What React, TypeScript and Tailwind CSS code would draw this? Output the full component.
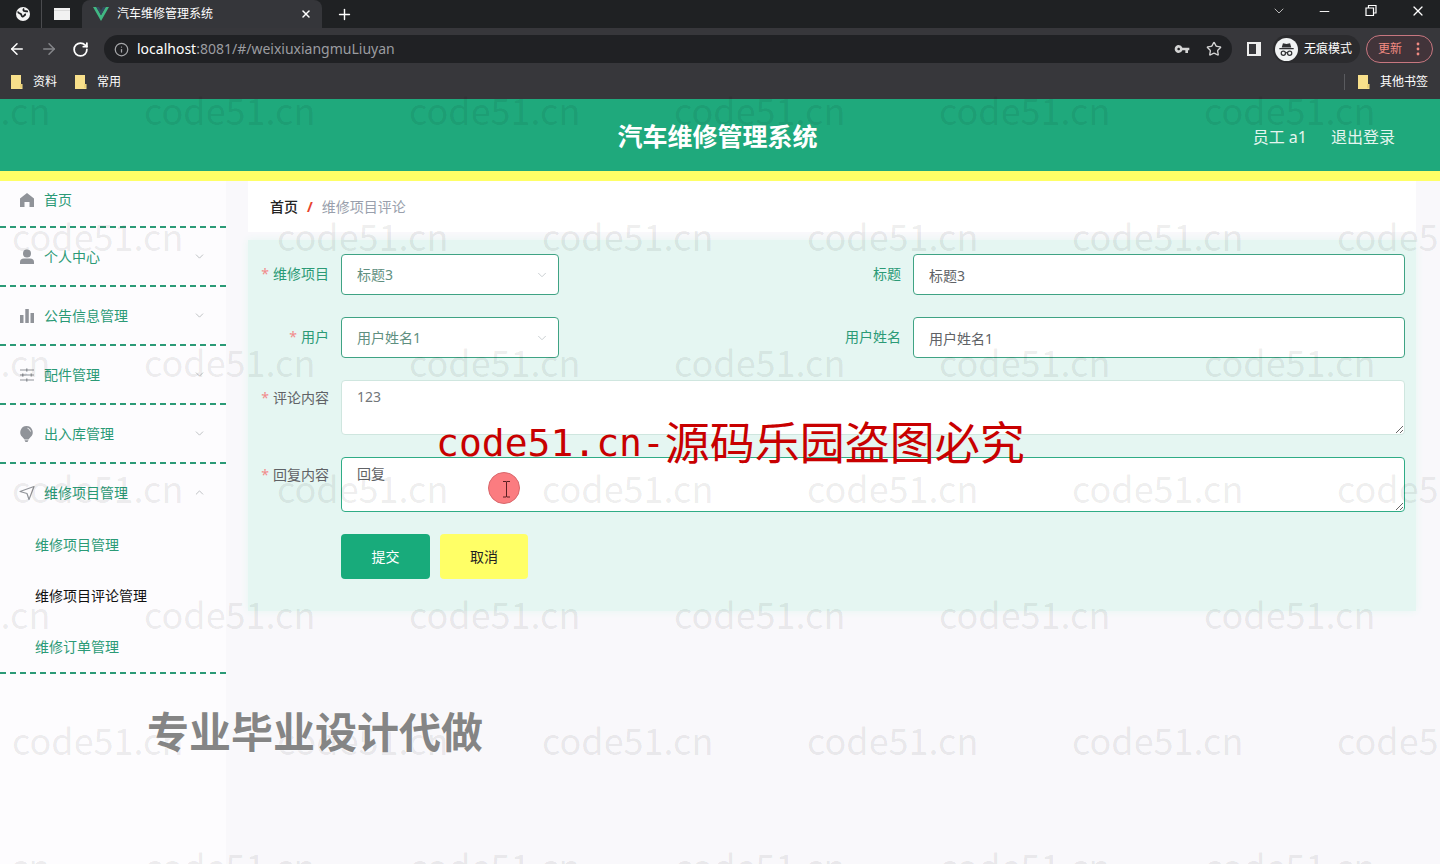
import { useState } from "react";
import type { ReactNode } from "react";
import { ArrowLeft, ArrowRight, ChevronDown, ChevronUp, Info, Minus, Plus, RotateCw, Star, X } from "lucide-react";
import { MdVpnKey } from "react-icons/md";

type MenuEntry = {
  label: string;
  icon: ReactNode;
  children?: string[];
};

const menu: MenuEntry[] = [
  { label: "个人中心", icon: <UserIcon /> },
  { label: "公告信息管理", icon: <DataIcon /> },
  { label: "配件管理", icon: <SlidersIcon /> },
  { label: "出入库管理", icon: <BulbIcon /> },
  {
    label: "维修项目管理",
    icon: <PositionIcon />,
    children: ["维修项目管理", "维修项目评论管理", "维修订单管理"]
  }
];

const watermarkRows = [0, 1, 2, 3, 4, 5, 6];
const watermarkCells = [0, 1, 2, 3, 4, 5];

export default function App() {
  return (
    <div className="relative flex min-h-screen flex-col overflow-hidden bg-[#f9f8fb] font-['Noto_Sans','Noto_Sans_CJK_SC',sans-serif] text-sm">
      <BrowserChrome />
      <SiteHeader />
      <div className="flex flex-1">
        <Sidebar />
        <main className="min-w-0 flex-1 pr-6 pl-[22px]">
          <nav aria-label="面包屑" className="flex h-[51px] items-center gap-[9px] bg-white px-[22px]">
            <a className="font-medium text-[#222]" href="#/">
              首页
            </a>
            <span className="font-bold text-[#e8432e]">/</span>
            <span className="text-[#999fac]">维修项目评论</span>
          </nav>
          <CommentForm />
        </main>
      </div>
      <Watermarks />
    </div>
  );
}

function BrowserChrome() {
  return (
    <div className="bg-[#37373b] text-xs text-white">
      <div className="flex h-7 items-stretch bg-[#1f2123]">
        <div className="flex w-[42px] items-center justify-center border-r border-[#4a4b4e] pl-1">
          <svg aria-hidden="true" height="16" viewBox="0 0 16 16" width="16">
            <circle cx="8" cy="8" fill="#f4f4f4" r="7" />
            <path
              d="M3 5.500c.3 2.500 2 1.500 3 2.700.8 1 .2 2 1.500 2.300 2 .4 1.500-2.200 3.500-2M9 2.500c-1.300 1.500-.5 2.500 1 2.600 1.200.1 1.800.4 3 .2"
              fill="none"
              stroke="#1f2123"
              strokeWidth="1.800"
            />
          </svg>
        </div>
        <div className="flex w-10 items-center justify-center">
          <svg aria-hidden="true" height="12" viewBox="0 0 16 12" width="16">
            <path d="M0 0h16v12H0z" fill="#f1f1f1" />
            <path d="M0 2.500h16" stroke="#dadada" />
          </svg>
        </div>
        <div className="flex w-60 items-center rounded-t-lg bg-[#35363a] pr-2.5 pl-[11px]">
          <svg aria-hidden="true" height="14" viewBox="0 0 16 14" width="16">
            <path d="M0 0h3.300L8 8.200 12.700 0H16L8 14z" fill="#41b883" />
            <path d="M3.300 0H6l2 3.500L10 0h2.700L8 8.200z" fill="#35495e" />
          </svg>
          <span className="ml-2 flex-1">汽车维修管理系统</span>
          <button aria-label="关闭标签页" type="button">
            <X size={12} strokeWidth={3} />
          </button>
        </div>
        <button aria-label="新标签页" className="ml-3.5" type="button">
          <Plus size={17} />
        </button>
        <div className="ml-auto flex items-center pr-3.5 pb-1.5">
          <button aria-label="搜索标签页" className="mr-[30px] text-[#b5b5b5]" type="button">
            <ChevronDown size={16} strokeWidth={1.500} />
          </button>
          <button aria-label="最小化" className="mr-8" type="button">
            <Minus size={15} strokeWidth={1.500} />
          </button>
          <button aria-label="还原" className="mr-8" type="button">
            <svg height="14" viewBox="0 0 14 14" width="14">
              <path d="M2 4h7.500v7.500H2zM4.500 4V1.500H12V9H9.500" fill="none" stroke="currentColor" strokeWidth="1.200" />
            </svg>
          </button>
          <button aria-label="关闭" type="button">
            <X size={16} strokeWidth={1.800} />
          </button>
        </div>
      </div>

      <div className="flex h-[42px] items-center pr-[7px] pl-2">
        <button aria-label="后退" type="button">
          <ArrowLeft size={18} />
        </button>
        <button aria-label="前进" className="ml-3.5 text-[#85868a]" type="button">
          <ArrowRight size={18} />
        </button>
        <button aria-label="刷新" className="ml-3.5" type="button">
          <RotateCw size={17} strokeWidth={2.500} />
        </button>
        <div className="ml-[15px] flex h-7 flex-1 items-center rounded-full bg-[#202124] px-2.5">
          <Info aria-hidden="true" className="text-[#a5a6a9]" size={15} />
          <p className="ml-2 flex-1 text-sm text-[#9b9ca0]">
            <span className="text-white">localhost</span>:8081/#/weixiuxiangmuLiuyan
          </p>
          <MdVpnKey aria-hidden="true" className="mr-4 text-[#d4d4d4]" size={16} />
          <Star aria-hidden="true" className="text-[#d4d4d4]" size={16} />
        </div>
        <button aria-label="侧边栏" className="ml-[15px]" type="button">
          <svg height="14" viewBox="0 0 14 14" width="14">
            <path d="M1 1h12v12H1z" fill="none" stroke="#eee" strokeWidth="2" />
            <path d="M9 1h4v12H9z" fill="#eee" />
          </svg>
        </button>
        <div className="ml-3 flex h-7 items-center gap-1.5 rounded-full bg-[#2b2b2e] pr-2 pl-0.5">
          <svg aria-hidden="true" height="23" viewBox="0 0 24 24" width="23">
            <circle cx="12" cy="12" fill="#f1f3f4" r="12" />
            <path d="M8.300 5.500 12 6.300l3.700-.8 1.300 4.500H7zM4.500 10.500h15v1.300h-15z" fill="#303134" />
            <circle cx="8.700" cy="16" fill="none" r="2.200" stroke="#303134" strokeWidth="1.300" />
            <circle cx="15.300" cy="16" fill="none" r="2.200" stroke="#303134" strokeWidth="1.300" />
            <path d="M10.900 15.600q1.100-.8 2.200 0" fill="none" stroke="#303134" strokeWidth="1.200" />
          </svg>
          <span>无痕模式</span>
        </div>
        <button
          className="ml-1.5 flex h-7 items-center gap-3.5 rounded-full border border-[#c77780] bg-[#42343a] pr-3 pl-[11px] text-[#f28b82]"
          type="button"
        >
          更新
          <svg aria-hidden="true" fill="currentColor" height="14" viewBox="0 0 4 14" width="4">
            <circle cx="2" cy="2" r="1.400" />
            <circle cx="2" cy="7" r="1.400" />
            <circle cx="2" cy="12" r="1.400" />
          </svg>
        </button>
      </div>

      <div className="flex h-[29px] items-center gap-[17px] pr-3 pb-1.5 pl-2.5">
        <Bookmark label="资料" />
        <Bookmark label="常用" />
        <div className="ml-auto flex items-center gap-3">
          <span className="h-4 w-px bg-[#5a5b5f]" />
          <Bookmark label="其他书签" />
        </div>
      </div>
    </div>
  );
}

function Bookmark({ label }: { label: string }) {
  return (
    <a className="flex items-center gap-2.5" href="#/">
      <svg aria-hidden="true" height="14" viewBox="0 0 13 14" width="13">
        <path d="M1 0h10v9h1.500v5H1z" fill="#f8e08b" />
        <path d="M11 9v4" stroke="#dcc067" />
      </svg>
      {label}
    </a>
  );
}

function SiteHeader() {
  return (
    <header className="grid h-[82px] grid-cols-[1fr_auto_1fr] items-center border-b-10 border-[#ffff66] bg-[#1fa97c] pt-[3px] pr-[45px] pl-10 text-white">
      <h1 className="col-start-2 text-[25px] font-bold">汽车维修管理系统</h1>
      <div className="flex justify-end gap-6 text-base text-[#e4f5ef]">
        <span>员工 a1</span>
        <button type="button">退出登录</button>
      </div>
    </header>
  );
}

function Sidebar() {
  const [expanded, setExpanded] = useState("维修项目管理");

  return (
    <aside className="w-[226px] shrink-0 bg-[#fdfcfe] text-[#2b9a76]">
      <a className="flex h-[47px] items-center gap-2 border-b-2 border-dashed border-[#2b9a76] pb-2 pl-[18px]" href="#/">
        <HomeIcon />
        首页
      </a>
      {menu.map((entry) => {
        const isOpen = expanded === entry.label;
        return (
          <div className="border-b-2 border-dashed border-[#2b9a76]" key={entry.label}>
            <button
              aria-expanded={isOpen}
              className="flex h-[57px] w-full cursor-pointer items-center gap-2 pr-5 pl-[18px] text-left"
              type="button"
              onClick={() => setExpanded(isOpen ? "" : entry.label)}
            >
              {entry.icon}
              <span className="flex-1">{entry.label}</span>
              {isOpen ? (
                <ChevronUp aria-hidden="true" className="text-[#b0b4b6]" size={13} strokeWidth={1.500} />
              ) : (
                <ChevronDown aria-hidden="true" className="text-[#b0b4b6]" size={13} strokeWidth={1.500} />
              )}
            </button>
            {isOpen && entry.children ? (
              <div className="-mt-0.5">
                {entry.children.map((child) => (
                  <a
                    className={`flex h-[51px] items-center pl-[35px] ${child === "维修项目评论管理" ? "text-[#111]" : ""}`}
                    href="#/"
                    key={child}
                  >
                    {child}
                  </a>
                ))}
              </div>
            ) : null}
          </div>
        );
      })}
    </aside>
  );
}

function CommentForm() {
  const [reply, setReply] = useState("回复");

  return (
    <form
      className="mt-2 bg-[#e5f6f2] pt-3.5 pr-[11px] pb-8 pl-[13px] shadow-[0_0_8px_#e5f6f2]"
      onSubmit={(event) => event.preventDefault()}
    >
      <div className="grid grid-cols-2 gap-y-[22px]">
        <Field id="project" label="维修项目" required tone="green">
          <SelectBox id="project" value="标题3" />
        </Field>
        <Field id="title" label="标题" tone="green">
          <input
            className="h-[41px] w-full rounded border border-[#3fa384] bg-white px-[15px] text-[#606266] outline-none"
            defaultValue="标题3"
            id="title"
          />
        </Field>
        <Field id="user" label="用户" required tone="green">
          <SelectBox id="user" value="用户姓名1" />
        </Field>
        <Field id="username" label="用户姓名" tone="green">
          <input
            className="h-[41px] w-full rounded border border-[#3fa384] bg-white px-[15px] text-[#606266] outline-none"
            defaultValue="用户姓名1"
            id="username"
          />
        </Field>
        <div className="col-span-2">
          <Field id="content" label="评论内容" required tone="gray">
            <textarea
              className="block h-[55px] w-full resize-y rounded border border-[#cfe6df] bg-white px-[15px] py-1.5 text-[#73767a] outline-none"
              defaultValue="123"
              id="content"
              readOnly
            />
          </Field>
        </div>
        <div className="col-span-2">
          <Field id="reply" label="回复内容" required tone="gray">
            <textarea
              className="block h-[55px] w-full resize-y rounded border border-[#2fac86] bg-white px-[15px] py-1.5 text-[#606266] outline-none"
              id="reply"
              value={reply}
              onChange={(event) => setReply(event.target.value)}
            />
          </Field>
        </div>
      </div>
      <div className="mt-[22px] flex gap-2.5 pl-20">
        <button className="h-[45px] w-[89px] rounded bg-[#18ab7b] text-white" type="submit">
          提交
        </button>
        <button className="h-[45px] w-[88px] rounded-sm bg-[#ffff66] text-[#222]" type="button">
          取消
        </button>
      </div>
    </form>
  );
}

type FieldProps = {
  id: string;
  label: string;
  required?: boolean;
  tone: "green" | "gray";
  children: ReactNode;
};

function Field({ id, label, required, tone, children }: FieldProps) {
  return (
    <div className="flex">
      <label
        className={`w-20 shrink-0 pr-3 text-right ${tone === "green" ? "leading-10 text-[#2b9a76]" : "leading-9 text-[#606266]"}`}
        htmlFor={id}
      >
        {required ? <span className="mr-1 text-[#f28b8b]">*</span> : null}
        {label}
      </label>
      <div className="min-w-0 flex-1">{children}</div>
    </div>
  );
}

function SelectBox({ id, value }: { id: string; value: string }) {
  return (
    <div className="relative w-[218px]">
      <select
        className="h-[41px] w-full appearance-none rounded border border-[#3fa384] bg-white px-[15px] text-[#5f8f80] outline-none"
        defaultValue={value}
        id={id}
      >
        <option>{value}</option>
      </select>
      <ChevronDown
        aria-hidden="true"
        className="pointer-events-none absolute top-3.5 right-2.5 text-[#c3c9cc]"
        size={14}
        strokeWidth={1.500}
      />
    </div>
  );
}

// Decorative layer above the page: tiled site mark, notices and the pointer highlight.
function Watermarks() {
  return (
    <div aria-hidden="true" className="pointer-events-none absolute inset-0 overflow-hidden select-none">
      <div className="absolute top-[47px] left-0 font-['Noto_Sans_CJK_SC',sans-serif] text-[36px] text-black/8">
        {watermarkRows.map((row) => (
          <div className={`flex h-[126px] items-center ${row % 2 === 0 ? "-ml-[121px]" : "ml-3"}`} key={row}>
            {watermarkCells.map((cell) => (
              <span className="w-[265px] shrink-0" key={cell}>
                code51.cn
              </span>
            ))}
          </div>
        ))}
      </div>
      <p className="absolute top-[698px] left-[147px] font-['Noto_Sans_CJK_SC',sans-serif] text-[42px] leading-16 font-bold text-[#858585] [text-shadow:0_0_2px_#fff,0_0_2px_#fff]">
        专业毕业设计代做
      </p>
      <svg className="absolute top-[472px] left-[488px]" height="32" viewBox="0 0 32 32" width="32">
        <circle cx="16" cy="16" fill="#fb7c80" r="15.500" stroke="#d8686c" />
        <path d="M15 9.500h3q.5 0 .5 1 0-1 .5-1h3M18.500 10v14M15 25h3q.5 0 .5-1 0 1 .5 1h3" fill="none" stroke="#5c1f22" />
      </svg>
      <p className="absolute top-[407px] left-[436px] flex items-center text-[45px] leading-16 whitespace-nowrap text-[#c80000]">
        <span className="pt-1 font-['DejaVu_Sans_Mono',monospace] text-[38px]">code51.cn-</span>
        <span className="font-['Noto_Sans_CJK_SC',sans-serif]">源码乐园盗图必究</span>
      </p>
    </div>
  );
}

function HomeIcon() {
  return (
    <svg aria-hidden="true" fill="#909399" height="18" viewBox="0 0 18 18" width="18">
      <path d="M9 2 2 7.500V16h4.500v-5h5v5H16V7.500z" />
    </svg>
  );
}

function UserIcon() {
  return (
    <svg aria-hidden="true" fill="#909399" height="18" viewBox="0 0 18 18" width="18">
      <circle cx="9" cy="5.500" r="4" />
      <path d="M2 16v-2q0-3.500 4-3.500h6q4 0 4 3.500v2z" />
    </svg>
  );
}

function DataIcon() {
  return (
    <svg aria-hidden="true" fill="#909399" height="18" viewBox="0 0 18 18" width="18">
      <path d="M2 8h3.500v8H2zM7.300 2h3.500v14H7.300zM12.500 6H16v10h-3.500z" />
    </svg>
  );
}

function SlidersIcon() {
  return (
    <svg aria-hidden="true" fill="#909399" height="18" viewBox="0 0 18 18" width="18">
      <path d="M2 4h14M2 9h14M2 14h14" stroke="#909399" />
      <path d="M8 2.500h1.500v3H8zM12.500 7.500H14v3h-1.500zM4 7.500h1.500v3H4zM8 12.500h1.500v3H8z" />
    </svg>
  );
}

function BulbIcon() {
  return (
    <svg aria-hidden="true" fill="#909399" height="18" viewBox="0 0 18 18" width="18">
      <path d="M8.500 1a6.300 6.300 0 0 0-3.900 11.200l1.900 2.300h4l1.900-2.300A6.300 6.300 0 0 0 8.500 1zM6.500 15.200h4L9.500 17h-2z" />
      <path d="M9.500 3.200q2.600.6 3 3.300" fill="none" stroke="#fff" strokeWidth=".9" />
    </svg>
  );
}

function PositionIcon() {
  return (
    <svg aria-hidden="true" fill="none" height="18" stroke="#909399" strokeLinejoin="round" viewBox="0 0 18 18" width="18">
      <path d="M2 7.500 16 2.500l-5 13-2-6z" strokeWidth="1.200" />
    </svg>
  );
}
